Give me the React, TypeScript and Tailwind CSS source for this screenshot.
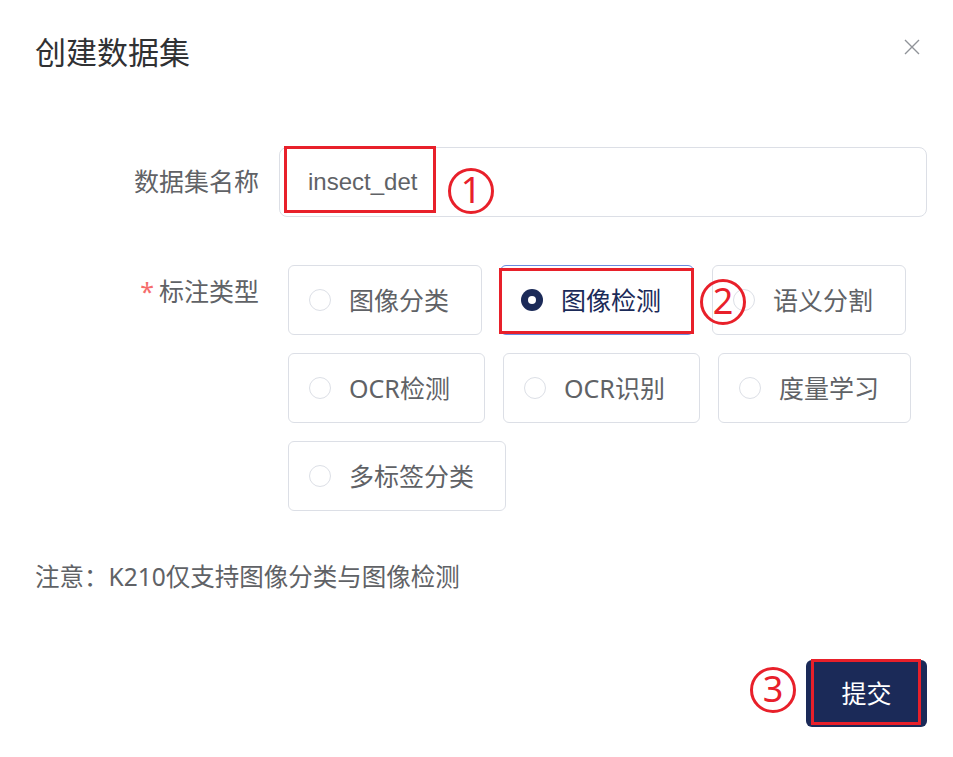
import type { ReactNode } from "react"

type Option = {
  label: string
  width: string
  checked?: boolean
}

const rows: Option[][] = [
  [
    { label: "图像分类", width: "w-[194px]" },
    { label: "图像检测", width: "w-[194px]", checked: true },
    { label: "语义分割", width: "w-[194px]" },
  ],
  [
    { label: "OCR检测", width: "w-[197px]" },
    { label: "OCR识别", width: "w-[197px]" },
    { label: "度量学习", width: "w-[193px]" },
  ],
  [{ label: "多标签分类", width: "w-[218px]" }],
]

function Mark({ n, className }: { n: string; className: string }) {
  return (
    <div
      className={
        "pointer-events-none absolute z-20 flex h-[46px] w-[46px] items-center justify-center rounded-full border-[3px] border-[#e8202a] text-[36px] leading-none text-[#e8202a] " +
        className
      }
    >
      <span className="-mt-[2px]">{n}</span>
    </div>
  )
}

function RedBox({ className }: { className: string }) {
  return (
    <div
      className={
        "pointer-events-none absolute z-10 border-[3px] border-[#e8202a] " +
        className
      }
    />
  )
}

function RadioCard({ option, children }: { option: Option; children?: ReactNode }) {
  return (
    <div
      className={
        option.checked
          ? "relative flex h-[70px] shrink-0 items-center rounded-[6px] border border-[#6b8be0] pl-[20px] " + option.width
          : "relative flex h-[70px] shrink-0 items-center rounded-[6px] border border-[#dcdfe6] pl-[20px] " + option.width
      }
    >
      {option.checked ? (
        <span className="flex h-[22px] w-[22px] items-center justify-center rounded-full bg-[#1b2a58]">
          <span className="h-[8px] w-[8px] rounded-full bg-white" />
        </span>
      ) : (
        <span className="h-[22px] w-[22px] rounded-full border border-[#dcdfe6] bg-white" />
      )}
      <span
        className={
          option.checked
            ? "ml-[18px] text-[25px] leading-none text-[#1b2a58]"
            : "ml-[18px] text-[25px] leading-none text-[#606266]"
        }
      >
        {option.label}
      </span>
      {children}
    </div>
  )
}

export default function App() {
  return (
    <div
      className="relative h-[757px] w-[953px] bg-white px-[35px] pt-[31px]"
      style={{ fontFamily: '"Noto Sans", "Noto Sans CJK SC", sans-serif' }}
    >
      <div className="flex h-[42px] items-start justify-between">
        <h1 className="text-[31px] leading-[42px] text-[#303133]">创建数据集</h1>
        <button className="mr-[-2px] mt-[8px] text-[#909399]">
          <svg width="16" height="16" viewBox="0 0 16 16" fill="none">
            <path d="M1 1L15 15M15 1L1 15" stroke="currentColor" strokeWidth="1.4" />
          </svg>
        </button>
      </div>

      <div className="mt-[74px]">
        <div className="flex">
          <label className="flex h-[70px] w-[244px] shrink-0 items-center justify-end pr-[20px] text-[25px] text-[#606266]">
            数据集名称
          </label>
          <div className="relative flex h-[70px] w-[648px] shrink-0 items-center rounded-[8px] border border-[#dcdfe6] pl-[28px]">
            <span
              className="text-[24px] text-[#606266]"
              style={{ fontFamily: '"Liberation Sans", "Noto Sans CJK SC", sans-serif' }}
            >
              insect_det
            </span>
            <RedBox className="left-[4px] top-[-2px] h-[67px] w-[152px]" />
            <Mark n="1" className="left-[168px] top-[20px]" />
          </div>
        </div>

        <div className="mt-[48px] flex">
          <label className="w-[244px] shrink-0 pr-[20px] pt-[10px] text-right text-[25px] leading-[32px] text-[#606266]">
            <span className="mr-[5px] text-[#f56c6c]">*</span>
            标注类型
          </label>
          <div className="ml-[9px] flex flex-col gap-[18px]">
            {rows.map((row, i) => (
              <div key={i} className="flex gap-[18px]">
                {row.map((option) => (
                  <RadioCard key={option.label} option={option}>
                    {option.checked ? (
                      <>
                        <RedBox className="left-[-2px] top-[2px] h-[66px] w-[195px]" />
                        <Mark n="2" className="left-[199px] top-[13px]" />
                      </>
                    ) : null}
                  </RadioCard>
                ))}
              </div>
            ))}
          </div>
        </div>

        <p className="mt-[50px] text-[24.5px] leading-[32px] text-[#606266]">
          注意：K210仅支持图像分类与图像检测
        </p>

        <div className="mr-[-9px] mt-[67px] flex justify-end">
          <div className="relative">
            <Mark n="3" className="left-[-56px] top-[7px]" />
            <button className="flex h-[67px] w-[121px] items-center justify-center rounded-[6px] bg-[#1b2a58] text-[25px] text-white">
              提交
            </button>
            <RedBox className="left-[5px] top-[-1px] h-[66px] w-[110px]" />
          </div>
        </div>
      </div>
    </div>
  )
}
